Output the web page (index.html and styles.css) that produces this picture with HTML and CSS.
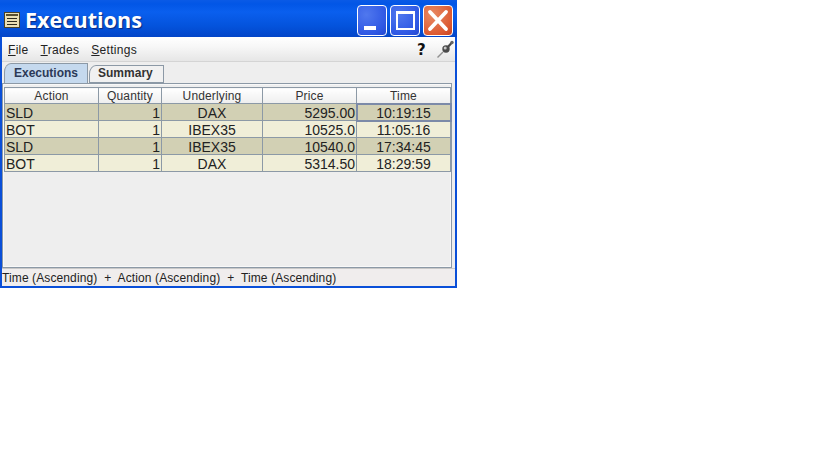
FILE: index.html
```html
<!DOCTYPE html>
<html lang="en">
  <head>
    <meta charset="UTF-8" />
    <link rel="stylesheet" href="styles.css">
    <title>Executions</title>
  </head>
  <body>
    <div class="window">
      <header class="titlebar">
        <svg class="appicon" width="16" height="16" viewBox="0 0 16 16">
          <rect x="0.5" y="0.5" width="15" height="15" fill="#eadfb4" stroke="#4a4228"/>
          <rect x="2" y="2" width="12" height="2" fill="#5a5030"/>
          <path d="M3 6.5H13M3 9.5H13M3 12.5H13" stroke="#2e2a1c" stroke-width="1"/>
        </svg>
        <h1>Executions</h1>
        <div class="winbuttons">
          <span class="winbtn blue">
            <svg width="28" height="29" viewBox="0 0 28 29"><rect x="6" y="20" width="12" height="4" fill="#fff"/></svg>
          </span>
          <span class="winbtn blue">
            <svg width="28" height="29" viewBox="0 0 28 29"><rect x="6" y="6" width="17" height="17" fill="none" stroke="#fff" stroke-width="2"/><rect x="5" y="5" width="19" height="3" fill="#fff"/></svg>
          </span>
          <span class="winbtn red">
            <svg width="28" height="29" viewBox="0 0 28 29"><path d="M6 6L22 23M22 6L6 23" stroke="#fff" stroke-width="3.8" stroke-linecap="round"/></svg>
          </span>
        </div>
      </header>

      <div class="content">
        <nav class="menubar">
          <span><u>F</u>ile</span>
          <span><u>T</u>rades</span>
          <span><u>S</u>ettings</span>
          <b class="help">?</b>
          <svg class="pin" width="18" height="18" viewBox="0 0 18 18">
            <path d="M0.5 17.5L6 12" stroke="#8f8f8f" stroke-width="1.4"/>
            <path d="M10 8L14.5 3" stroke="#4a4a4a" stroke-width="2.2"/>
            <circle cx="9" cy="9" r="3.7" fill="#4a4a4a"/>
            <circle cx="8.2" cy="8" r="1.5" fill="#c8c8c8"/>
            <circle cx="15" cy="2.5" r="1.7" fill="#666"/>
          </svg>
        </nav>

        <div class="tabs">
          <span class="tab active">Executions</span>
          <span class="tab">Summary</span>
        </div>

        <section class="panel">
          <table>
            <thead>
              <tr>
                <th class="c1">Action</th>
                <th class="c2">Quantity</th>
                <th class="c3">Underlying</th>
                <th class="c4">Price</th>
                <th class="c5">Time</th>
              </tr>
            </thead>
            <tbody>
              <tr>
                <td>SLD</td><td class="num">1</td><td class="mid">DAX</td><td class="num">5295.00</td><td class="mid focus">10:19:15</td>
              </tr>
              <tr>
                <td>BOT</td><td class="num">1</td><td class="mid">IBEX35</td><td class="num">10525.0</td><td class="mid">11:05:16</td>
              </tr>
              <tr>
                <td>SLD</td><td class="num">1</td><td class="mid">IBEX35</td><td class="num">10540.0</td><td class="mid">17:34:45</td>
              </tr>
              <tr>
                <td>BOT</td><td class="num">1</td><td class="mid">DAX</td><td class="num">5314.50</td><td class="mid">18:29:59</td>
              </tr>
            </tbody>
          </table>
        </section>

        <footer class="status">Time (Ascending)&nbsp; +&nbsp; Action (Ascending)&nbsp; +&nbsp; Time (Ascending)</footer>
      </div>
    </div>
  </body>
</html>
```

FILE: styles.css
```css
* {
  margin: 0;
  padding: 0;
  box-sizing: border-box;
}

body {
  background-color: white;
  font-family: "Liberation Sans", Arial, sans-serif;
}

.window {
  width: 457px;
  height: 288px;
  display: flex;
  flex-direction: column;
  background-color: #0a4fd8;
  padding: 0 2px 2px 2px;
}

.titlebar {
  height: 37px;
  margin: 0 -2px;
  padding: 3px 4px 0 4px;
  display: flex;
  align-items: flex-start;
  background: linear-gradient(#0a5ae6 0, #0256e6 4px, #0a5fee 12px, #0453dc 26px, #0345c8 100%);
}

.appicon {
  margin-top: 9px;
}

.titlebar h1 {
  margin: 2px 0 0 5px;
  color: white;
  font-family: "Open Sans", sans-serif;
  font-size: 21.6px;
  font-weight: 700;
  line-height: 30px;
  text-shadow: 1px 1px 1px #0a2a80;
}

.winbuttons {
  margin-left: auto;
  display: flex;
  gap: 3px;
  padding-top: 2px;
}

.winbtn {
  width: 30px;
  height: 31px;
  border: 1px solid white;
  border-radius: 4px;
}

.winbtn svg {
  display: block;
}

.blue {
  background: radial-gradient(circle at 30% 30%, #5078ee, #2f58e4 70%, #2448d0);
}

.red {
  background: radial-gradient(circle at 30% 30%, #e88a64, #dc5a32 70%, #c84020);
}

.content {
  flex: 1;
  display: flex;
  flex-direction: column;
  min-height: 0;
  background-color: #eeeeee;
}

.menubar {
  height: 25px;
  padding: 2px 0 0 6px;
  display: flex;
  align-items: center;
  gap: 12px;
  background: linear-gradient(#ffffff, #f7f7f7 40%, #e6e6e6);
  border-bottom: 1px solid #d4d4d4;
  font-size: 12px;
  letter-spacing: 0.3px;
  color: #222;
}

.help {
  margin-left: auto;
  font-size: 15px;
  font-family: "DejaVu Sans", sans-serif;
  color: #111;
}

.pin {
  margin-left: -1px;
  margin-top: -3px;
}

.tabs {
  height: 21px;
  padding: 2px 0 0 2px;
  display: flex;
  align-items: flex-end;
  font-size: 12px;
  font-weight: 700;
  color: #333;
}

.tab {
  height: 18px;
  margin-left: 1px;
  padding: 0 10px 0 8px;
  background-color: #f1f1f1;
  border: 1px solid #8c99a6;
  border-top-left-radius: 7px 9px;
}

.tab.active {
  height: 20px;
  margin-left: 0;
  padding: 2px 9px 0 9px;
  background-color: #c5d9ee;
  border-bottom: none;
  color: #2c3a58;
}

.panel {
  flex: none;
  width: 450px;
  height: 185px;
  padding: 3px 1px 1px 1px;
  border: 1px solid #8c99a6;
  box-shadow: inset 0 0 0 1px #f8f8f8;
}

table {
  border-collapse: collapse;
  table-layout: fixed;
  width: 447px;
  font-size: 14px;
  color: #222;
}

.c1 { width: 94px; }
.c2 { width: 63px; }
.c3 { width: 101px; }
.c4 { width: 94px; }
.c5 { width: 94px; }

th {
  height: 16px;
  font-size: 12px;
  font-weight: 400;
  letter-spacing: 0.15px;
  color: #333;
  background: linear-gradient(#ffffff, #eeeeee);
  border: 1px solid #8c99a6;
  padding-top: 2px;
  line-height: 13px;
}

td {
  height: 17px;
  padding: 2px 1px 0 1px;
  line-height: 14px;
  border: 1px solid #8c99a6;
  white-space: nowrap;
  overflow: hidden;
}

tbody tr:nth-child(odd) {
  background-color: #d2d0b4;
}

tbody tr:nth-child(even) {
  background-color: #f0eed8;
}

.num {
  text-align: right;
}

.mid {
  text-align: center;
}

.focus {
  outline: 2px solid #7c8aa8;
  outline-offset: -1px;
}

.status {
  height: 18px;
  border-top: 1px solid #c8c8c8;
  background-color: #f0eded;
  font-size: 12px;
  letter-spacing: 0.11px;
  line-height: 19px;
  color: #222;
  white-space: nowrap;
}
```
